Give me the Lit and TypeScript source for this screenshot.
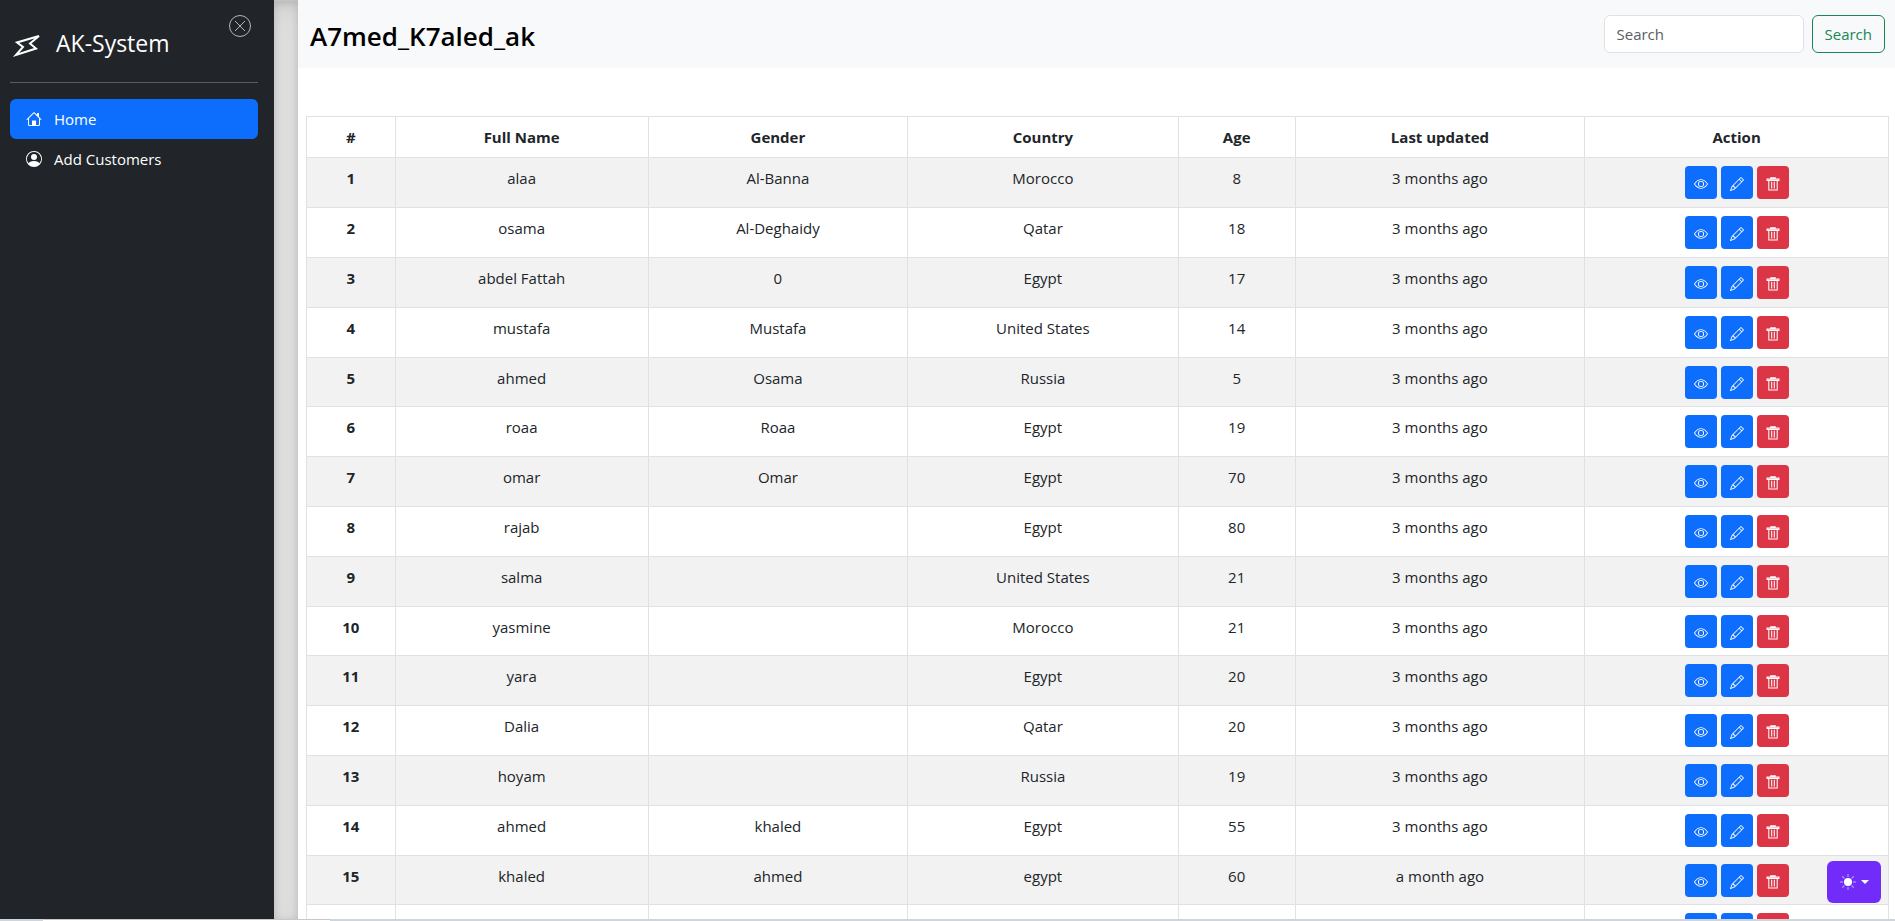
import { LitElement, html, css, svg, nothing } from "lit";
import { customElement, state } from "lit/decorators.js";

interface Customer {
  name: string;
  gender: string;
  country: string;
  age: string;
  updated: string;
}

const row = (name: string, gender: string, country: string, age: string, updated = "3 months ago"): Customer => ({
  name, gender, country, age, updated,
});

const CUSTOMERS: Customer[] = [
  row("alaa", "Al-Banna", "Morocco", "8"),
  row("osama", "Al-Deghaidy", "Qatar", "18"),
  row("abdel Fattah", "0", "Egypt", "17"),
  row("mustafa", "Mustafa", "United States", "14"),
  row("ahmed", "Osama", "Russia", "5"),
  row("roaa", "Roaa", "Egypt", "19"),
  row("omar", "Omar", "Egypt", "70"),
  row("rajab", "", "Egypt", "80"),
  row("salma", "", "United States", "21"),
  row("yasmine", "", "Morocco", "21"),
  row("yara", "", "Egypt", "20"),
  row("Dalia", "", "Qatar", "20"),
  row("hoyam", "", "Russia", "19"),
  row("ahmed", "khaled", "Egypt", "55"),
  row("khaled", "ahmed", "egypt", "60", "a month ago"),
  row("khaled", "ahmed", "Egypt", "60", "a month ago"),
];

const PATHS = {
  home: svg`<path d="M8.707 1.5a1 1 0 0 0-1.414 0L.646 8.146a.5.5 0 0 0 .708.708L2 8.207V13.5A1.5 1.5 0 0 0 3.5 15h9a1.5 1.5 0 0 0 1.5-1.5V8.207l.646.647a.5.5 0 0 0 .708-.708L13 5.793V2.5a.5.5 0 0 0-.5-.5h-1a.5.5 0 0 0-.5.5v1.293zM13 7.207V13.5a.5.5 0 0 1-.5.5H10v-4a.5.5 0 0 0-.5-.5h-3a.5.5 0 0 0-.5.5v4H3.5a.5.5 0 0 1-.5-.5V7.207l5-5z"/>`,
  person: svg`<path d="M11 6a3 3 0 1 1-6 0 3 3 0 0 1 6 0"/><path fill-rule="evenodd" d="M0 8a8 8 0 1 1 16 0A8 8 0 0 1 0 8m8-7a7 7 0 0 0-5.468 11.37C3.242 11.226 4.805 10 8 10s4.757 1.225 5.468 2.37A7 7 0 0 0 8 1"/>`,
  eye: svg`<path d="M16 8s-3-5.500-8-5.500S0 8 0 8s3 5.500 8 5.500S16 8 16 8M1.173 8a13 13 0 0 1 1.660-2.043C4.120 4.668 5.880 3.500 8 3.500s3.879 1.168 5.168 2.457A13 13 0 0 1 14.828 8q-.086.130-.195.288c-.335.480-.830 1.120-1.465 1.755C11.879 11.332 10.119 12.500 8 12.500s-3.879-1.168-5.168-2.457A13 13 0 0 1 1.172 8z"/><path d="M8 5.500a2.500 2.500 0 1 0 0 5 2.500 2.500 0 0 0 0-5M4.500 8a3.500 3.500 0 1 1 7 0 3.500 3.500 0 0 1-7 0"/>`,
  pencil: svg`<path d="M12.146.146a.5.5 0 0 1 .708 0l3 3a.5.5 0 0 1 0 .708l-10 10a.5.5 0 0 1-.168.110l-5 2a.5.5 0 0 1-.650-.650l2-5a.5.5 0 0 1 .110-.168zM11.207 2.500 13.500 4.793 14.793 3.500 12.500 1.207zm1.586 3L10.500 3.207 4 9.707V10h.5a.5.5 0 0 1 .5.5v.5h.5a.5.5 0 0 1 .5.5v.5h.293zm-9.761 5.175-.106.106-1.528 3.821 3.821-1.528.106-.106A.5.5 0 0 1 5 12.500V12h-.5a.5.5 0 0 1-.5-.5V11h-.5a.5.5 0 0 1-.468-.325"/>`,
  trash: svg`<path fill="none" stroke="currentColor" stroke-width="1.2" d="M5.400 2.300V1h5.200v1.300M1.200 2.400h13.600v1.700H1.200zM3.200 4.200v10.600h9.600V4.200M6.500 5.500v7.500M9.500 5.500v7.500"/>`,
  sun: svg`<circle cx="8" cy="8" r="4"/><path opacity="0.6" d="M7.500 0h1v3h-1zM7.500 13h1v3h-1zM0 7.500h3v1H0zM13 7.500h3v1h-3zM2 2.700l.7-.7 2.100 2.100-.7.7zM11.200 11.900l.7-.7 2.100 2.100-.7.7zM2 13.300l2.100-2.100.7.7L2.700 14zM11.200 4.100 13.300 2l.7.7-2.100 2.100z"/>`,
};

const icon = (name: keyof typeof PATHS, cls = "icon") =>
  html`<svg class=${cls} viewBox="0 0 16 16" fill="currentColor" aria-hidden="true">${PATHS[name]}</svg>`;

@customElement("app-root")
export class AppRoot extends LitElement {
  @state() private sidebarOpen = true;

  static styles = css`
    :host {
      display: flex;
      height: 100vh;
      overflow: hidden;
      position: relative;
      background: #fff;
      color: #212529;
      font: 400 15px/24px "Open Sans", "Noto Sans", sans-serif;
    }
    * { box-sizing: border-box; }
    button, input { font: inherit; }
    button { cursor: pointer; }
    .icon { display: block; width: 16px; height: 16px; flex: none; }

    .sidebar {
      flex: 0 0 274px;
      padding: 15px 16px 16px 10px;
      background: #212529;
      color: #fff;
    }
    .sidebar-head {
      display: flex;
      align-items: flex-start;
      justify-content: space-between;
      height: 68px;
      border-bottom: 1px solid #5a5d60;
    }
    .brand {
      display: flex;
      align-items: center;
      gap: 12px;
      padding: 10px 0 0 2px;
      color: #fff;
      font-size: 23px;
      line-height: 36px;
      text-decoration: none;
    }
    .brand-icon { width: 32px; height: 32px; }
    .close {
      display: block;
      margin: 0 7px 0 0;
      padding: 0;
      border: 0;
      background: none;
      color: #b5b7b9;
    }
    .close-icon { display: block; width: 22px; height: 22px; }
    .nav {
      margin: 16px 0 0;
      padding: 0;
      list-style: none;
    }
    .nav-link {
      display: flex;
      align-items: center;
      gap: 12px;
      padding: 8px 16px;
      border-radius: 6px;
      color: #fff;
      text-decoration: none;
    }
    .nav-link.active { background: #0d6efd; }

    .divider {
      flex: 0 0 24px;
      background: rgba(0, 0, 0, 0.1);
      border: solid rgba(0, 0, 0, 0.15);
      border-width: 1px 0;
      box-shadow: inset 0 8px 24px rgba(0, 0, 0, 0.1), inset 0 2px 8px rgba(0, 0, 0, 0.15);
    }

    .main { flex: 1 1 0; min-width: 0; }
    .topbar {
      display: flex;
      align-items: center;
      justify-content: space-between;
      height: 68px;
      padding: 0 10px 0 12px;
      background: #f8f9fa;
    }
    .title {
      margin: 0;
      padding-top: 4px;
      color: #000;
      font-size: 26px;
      font-weight: 600;
      line-height: 36px;
    }
    .search { display: flex; gap: 8px; }
    .search-input {
      width: 200px;
      height: 38px;
      padding: 0 12px;
      border: 1px solid #dee2e6;
      border-radius: 6px;
      background: #fff;
      color: #212529;
    }
    .search-input::placeholder { color: #5a5e62; opacity: 1; }
    .search-button {
      height: 38px;
      padding: 0 12px;
      border: 1px solid #198754;
      border-radius: 6px;
      background: transparent;
      color: #198754;
    }

    .table-wrap { padding: 48px 6px 0 8px; }
    .table {
      width: 100%;
      table-layout: fixed;
      border-collapse: collapse;
      text-align: center;
    }
    .table th, .table td {
      padding: 8px 8px 7px;
      border: 1px solid #dee2e6;
      vertical-align: top;
    }
    .table thead th { height: 41px; }
    .table tbody tr { height: 50px; }
    .table tbody tr:nth-child(5n) { height: 49px; }
    .table tbody tr:nth-child(odd) { background: #f2f2f2; }
    .table th { font-weight: 700; }
    .c-index { width: 5.6%; }
    .c-name { width: 16%; }
    .c-gender { width: 16.4%; }
    .c-country { width: 17.1%; }
    .c-age { width: 7.4%; }
    .c-updated { width: 18.3%; }
    .actions { display: flex; justify-content: center; gap: 4px; }
    .action {
      display: grid;
      place-items: center;
      width: 32px;
      height: 33px;
      padding: 2px 0 0;
      border: 0;
      border-radius: 4px;
      background: #0d6efd;
      color: #fff;
    }
    .action.danger { background: #dc3545; }
    .action-icon { width: 14px; height: 14px; }

    .theme {
      position: absolute;
      right: 14px;
      bottom: 18px;
      display: flex;
      align-items: center;
      justify-content: center;
      gap: 5px;
      width: 54px;
      height: 42px;
      padding: 0;
      border: 0;
      border-radius: 6px;
      background: #712cf9;
      color: #fff;
    }
    .caret {
      border: solid transparent;
      border-width: 4px 4px 0;
      border-top-color: #fff;
    }
    .edge {
      position: absolute;
      left: 0;
      right: 0;
      bottom: 0;
      height: 2px;
      background: #d0d5dc;
    }
    .status {
      width: 287px;
      height: 2px;
      margin-left: 43px;
      border-top: 1px solid #c8c8c8;
      background: #fff;
    }
  `;

  render() {
    return html`
      ${this.sidebarOpen ? this.renderSidebar() : nothing}
      <div class="divider"></div>
      <main class="main">
        <header class="topbar">
          <h1 class="title">A7med_K7aled_ak</h1>
          <form class="search" role="search" @submit=${(e: Event) => e.preventDefault()}>
            <input class="search-input" type="search" placeholder="Search" aria-label="Search" />
            <button class="search-button" type="submit">Search</button>
          </form>
        </header>
        <div class="table-wrap">
          <table class="table">
            <thead>
              <tr>
                <th class="c-index" scope="col">#</th>
                <th class="c-name" scope="col">Full Name</th>
                <th class="c-gender" scope="col">Gender</th>
                <th class="c-country" scope="col">Country</th>
                <th class="c-age" scope="col">Age</th>
                <th class="c-updated" scope="col">Last updated</th>
                <th scope="col">Action</th>
              </tr>
            </thead>
            <tbody>${CUSTOMERS.map((c, i) => this.renderRow(c, i + 1))}</tbody>
          </table>
        </div>
      </main>
      <button class="theme" type="button" aria-label="Toggle theme">
        ${icon("sun")}<span class="caret"></span>
      </button>
      <div class="edge"><div class="status"></div></div>
    `;
  }

  private renderSidebar() {
    return html`
      <aside class="sidebar">
        <div class="sidebar-head">
          <a class="brand" href="#">
            <svg class="brand-icon" viewBox="0 0 32 32" fill="none" stroke="currentColor" stroke-width="2" aria-hidden="true">
              <path d="M27 9 5 15.500 11 20 4 28 24 21.500 18 16.500z" />
            </svg>
            AK-System
          </a>
          <button class="close" type="button" aria-label="Close sidebar" @click=${() => (this.sidebarOpen = false)}>
            <svg class="close-icon" viewBox="0 0 22 22" fill="none" stroke="currentColor" aria-hidden="true">
              <circle cx="11" cy="11" r="10.500" />
              <path d="M6 6l10 10M16 6 6 16" />
            </svg>
          </button>
        </div>
        <ul class="nav">
          <li><a class="nav-link active" href="#" aria-current="page">${icon("home")}Home</a></li>
          <li><a class="nav-link" href="#add">${icon("person")}Add Customers</a></li>
        </ul>
      </aside>
    `;
  }

  private renderRow(c: Customer, index: number) {
    return html`
      <tr>
        <th scope="row">${index}</th>
        <td>${c.name}</td>
        <td>${c.gender}</td>
        <td>${c.country}</td>
        <td>${c.age}</td>
        <td>${c.updated}</td>
        <td>
          <div class="actions">
            <button class="action" type="button" aria-label="View ${c.name}">${icon("eye", "action-icon")}</button>
            <button class="action" type="button" aria-label="Edit ${c.name}">${icon("pencil", "action-icon")}</button>
            <button class="action danger" type="button" aria-label="Delete ${c.name}">${icon("trash", "action-icon")}</button>
          </div>
        </td>
      </tr>
    `;
  }
}
